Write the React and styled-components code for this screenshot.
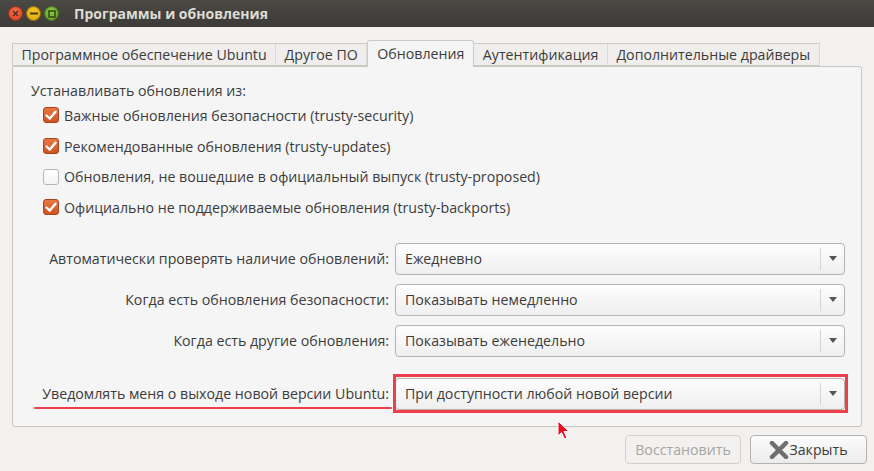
import React from "react";
import styled, { createGlobalStyle } from "styled-components";

const Global = createGlobalStyle`
  html, body { margin: 0; padding: 0; }
  body { width: 874px; height: 471px; overflow: hidden; background: #f2f1f0;
    font-family: "Open Sans", "DejaVu Sans", sans-serif; }
  * { box-sizing: border-box; }
`;

const Window = styled.div`
  position: relative;
  width: 874px;
  height: 471px;
  display: flex;
  flex-direction: column;
  background: #f2f1f0;
  color: #3c3c3c;
  font-size: 14.2px;
`;

const TitleBar = styled.div`
  height: 27px;
  flex: none;
  display: flex;
  align-items: center;
  padding-left: 8px;
  background: linear-gradient(#4a4944, #3c3b37);
`;

const Dot = styled.div`
  width: 15px;
  height: 15px;
  border-radius: 50%;
  margin-right: 3px;
  background: ${(p) => p.$c};
  border: 1px solid rgba(0,0,0,0.35);
  display: flex;
  align-items: center;
  justify-content: center;
`;

const Title = styled.div`
  margin-left: 12px;
  color: #dfdbd2;
  font-weight: bold;
  font-size: 14px;
`;

const Body = styled.div`
  flex: 1;
  display: flex;
  flex-direction: column;
  padding: 13px 7px 0 12px;
`;

const Tabs = styled.div`
  display: flex;
  align-items: flex-end;
  height: 26px;
  position: relative;
  z-index: 1;
`;

const Tab = styled.div`
  height: ${(p) => (p.$active ? "27px" : "23px")};
  margin-bottom: ${(p) => (p.$active ? "-1px" : "0")};
  padding: 0 ${(p) => (p.$active ? "9px" : "8.5px")};
  display: flex;
  align-items: center;
  padding-bottom: ${(p) => (p.$active ? "2px" : "0")};
  border: 1px solid #cdc9c4;
  border-bottom: ${(p) => (p.$active ? "none" : "1px solid #cdc9c4")};
  border-left: ${(p) => (p.$first || p.$active ? "1px solid #cdc9c4" : "none")};
  border-right: ${(p) => (p.$active ? "1px solid #cdc9c4" : "1px solid #dcd8d3")};
  border-radius: ${(p) => (p.$active ? "3px 3px 0 0" : "0")};
  background: ${(p) => (p.$active ? "#f5f5f5" : "#efeeec")};
  white-space: nowrap;
`;

const Panel = styled.div`
  width: 850px;
  height: 361px;
  background: #f5f5f5;
  border: 1px solid #c9c5c0;
  border-radius: 0 3px 3px 3px;
  padding: 13px 16px 0 18px;
  display: flex;
  flex-direction: column;
`;

const Heading = styled.div`
  height: 20px;
  display: flex;
  align-items: center;
`;

const CheckRow = styled.div`
  height: 30.7px;
  display: flex;
  align-items: center;
  padding-left: 12px;
  gap: 5px;
  white-space: nowrap;
`;

const Box = styled.div`
  width: 16px;
  height: 16px;
  flex: none;
  border-radius: 3px;
  display: flex;
  align-items: center;
  justify-content: center;
  background: ${(p) =>
    p.$on ? "linear-gradient(#e87744, #cd5420)" : "linear-gradient(#ffffff, #f4f4f4)"};
  border: 1px solid ${(p) => (p.$on ? "#a8451c" : "#b9b5b0")};
`;

const Grid = styled.div`
  margin-top: 20px;
  display: grid;
  grid-template-columns: 1fr 450px;
  column-gap: 6px;
  row-gap: 9px;
  align-items: center;
`;

const Label = styled.div`
  justify-self: end;
  position: relative;
  white-space: nowrap;
  margin-top: ${(p) => (p.$mark ? "12px" : "0")};
  ${(p) =>
    p.$mark &&
    `&::after { content: ""; position: absolute; left: -8px; right: -3px; bottom: -6px;
      height: 2.5px; background: #ee3e4c; border-radius: 1px; }`}
`;

const Combo = styled.div`
  position: relative;
  height: 32px;
  border: 1px solid #b7b3ad;
  border-radius: 4px;
  background: linear-gradient(#fdfdfd, #efefef);
  display: flex;
  align-items: center;
  padding-left: 9px;
  margin-top: ${(p) => (p.$mark ? "12px" : "0")};
  ${(p) =>
    p.$mark &&
    `&::after { content: ""; position: absolute; left: -3px; right: -4px; top: -5px; bottom: -4px;
      border: 3px solid #ee3e4c; }`}
`;

const ComboText = styled.div`
  flex: 1;
`;

const ArrowCell = styled.div`
  width: 24px;
  height: 22px;
  border-left: 1px solid #d6d4d1;
  display: flex;
  align-items: center;
  justify-content: center;
`;

const Footer = styled.div`
  flex: 1;
  display: flex;
  justify-content: flex-end;
  align-items: flex-start;
  padding-top: 8px;
  gap: 9px;
`;

const Button = styled.div`
  height: 29px;
  border: 1px solid ${(p) => (p.$disabled ? "#d3d0cc" : "#b5b1ac")};
  border-radius: 4px;
  background: ${(p) => (p.$disabled ? "#f2f1f0" : "linear-gradient(#fcfcfc, #ebebeb)")};
  color: ${(p) => (p.$disabled ? "#a7a5a2" : "#3c3c3c")};
  display: flex;
  align-items: center;
  justify-content: center;
  width: ${(p) => p.$w}px;
  font-size: 14.2px;
  gap: 0px;
`;

const Cursor = styled.svg`
  position: absolute;
  left: 557px;
  top: 420px;
`;

const Check = () => (
  <svg width="12" height="11" viewBox="0 0 12 11">
    <path d="M1.5 5.5 L4.8 8.6 L10.5 1.8" fill="none" stroke="#fff" strokeWidth="2.4" strokeLinecap="round" strokeLinejoin="round" />
  </svg>
);

const Arrow = () => (
  <svg width="8" height="5" viewBox="0 0 8 5">
    <path d="M0 0 H8 L4 5 Z" fill="#555" />
  </svg>
);

const items = [
  ["Важные обновления безопасности (trusty-security)", true],
  ["Рекомендованные обновления (trusty-updates)", true],
  ["Обновления, не вошедшие в официальный выпуск (trusty-proposed)", false],
  ["Официально не поддерживаемые обновления (trusty-backports)", true],
];

const combos = [
  ["Автоматически проверять наличие обновлений:", "Ежедневно"],
  ["Когда есть обновления безопасности:", "Показывать немедленно"],
  ["Когда есть другие обновления:", "Показывать еженедельно"],
  ["Уведомлять меня о выходе новой версии Ubuntu:", "При доступности любой новой версии", true],
];

export default function App() {
  return (
    <Window>
      <Global />
      <TitleBar>
        <Dot $c="radial-gradient(circle at 50% 35%, #f26d4a, #d8431f)">
          <svg width="7" height="7" viewBox="0 0 7 7">
            <path d="M1 1 L6 6 M6 1 L1 6" stroke="#4a2a20" strokeWidth="1.3" />
          </svg>
        </Dot>
        <Dot $c="radial-gradient(circle at 50% 35%, #f4c623, #d9a80e)">
          <svg width="8" height="3" viewBox="0 0 8 3">
            <rect x="0" y="0.5" width="8" height="2" fill="#4a3c12" />
          </svg>
        </Dot>
        <Dot $c="radial-gradient(circle at 50% 35%, #8fc84a, #5e9a26)">
          <svg width="8" height="8" viewBox="0 0 8 8">
            <rect x="1" y="1" width="6" height="6" fill="none" stroke="#2c4212" strokeWidth="1.4" />
          </svg>
        </Dot>
        <Title>Программы и обновления</Title>
      </TitleBar>
      <Body>
        <Tabs>
          <Tab $first>Программное обеспечение Ubuntu</Tab>
          <Tab>Другое ПО</Tab>
          <Tab $active>Обновления</Tab>
          <Tab>Аутентификация</Tab>
          <Tab>Дополнительные драйверы</Tab>
        </Tabs>
        <Panel>
          <Heading>Устанавливать обновления из:</Heading>
          {items.map(([t, on]) => (
            <CheckRow key={t}>
              <Box $on={on}>{on && <Check />}</Box>
              {t}
            </CheckRow>
          ))}
          <Grid>
            {combos.map(([l, v, mark]) => (
              <React.Fragment key={l}>
                <Label $mark={mark}>{l}</Label>
                <Combo $mark={mark}>
                  <ComboText>{v}</ComboText>
                  <ArrowCell>
                    <Arrow />
                  </ArrowCell>
                </Combo>
              </React.Fragment>
            ))}
          </Grid>
        </Panel>
        <Footer>
          <Button $disabled $w={116}>Восстановить</Button>
          <Button $w={117}>
            <svg width="20" height="18" viewBox="0 0 20 18">
              <path d="M3 2 L17 16 M17 2 L3 16" stroke="#6e6e6e" strokeWidth="4.5" strokeLinecap="round" />
            </svg>
            Закрыть
          </Button>
        </Footer>
      </Body>
      <Cursor width="14" height="20" viewBox="0 0 14 20">
        <path d="M1 1 L1 16 L4.5 12.5 L7.5 19 L10 18 L7 11.5 L12 11.5 Z" fill="#e8101e" stroke="#fff" strokeWidth="1" />
      </Cursor>
    </Window>
  );
}
